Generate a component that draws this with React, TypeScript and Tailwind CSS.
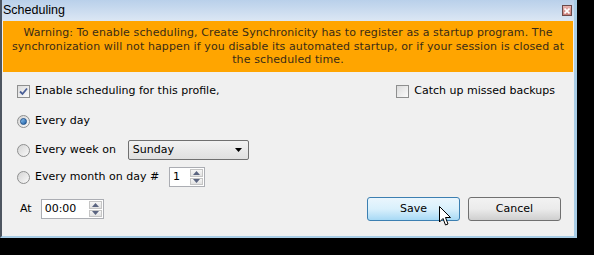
import React from 'react'

const ui = { fontFamily: '"DejaVu Sans", Verdana, sans-serif' }

function CheckBox({ checked }: { checked?: boolean }) {
    return (
        <span className="w-[13px] h-[13px] border border-[#8e8f8f] bg-gradient-to-br from-[#dcdcdc] to-[#fbfbfb] flex items-center justify-center shrink-0">
            {checked && (
                <svg width="9" height="9" viewBox="0 0 9 9">
                    <path d="M1 4.5 L3.5 7 L8 1.5" fill="none" stroke="#4a5f97" strokeWidth="1.8" />
                </svg>
            )}
        </span>
    )
}

function Radio({ checked }: { checked?: boolean }) {
    return (
        <span className="w-[13px] h-[13px] rounded-full border border-[#8e8f8f] bg-gradient-to-br from-[#d4d4d4] to-[#fafafa] flex items-center justify-center shrink-0">
            {checked && <span className="w-[7px] h-[7px] rounded-full bg-gradient-to-br from-[#8cc4f0] to-[#1b5fa6] border border-[#1e4f8a]" />}
        </span>
    )
}

function Spinner({ value, width }: { value: string; width: string }) {
    return (
        <div className={`${width} h-[20px] border border-[#abadb3] bg-white flex items-stretch`}>
            <span className="flex-1 pl-[3px] text-[11px] leading-[18px] text-black">{value}</span>
            <div className="w-[15px] flex flex-col gap-[1px] p-[1px]">
                <span className="flex-1 border border-[#c5c5c5] bg-gradient-to-b from-[#f6f6f6] to-[#e2e2e2] flex items-center justify-center">
                    <svg width="7" height="4" viewBox="0 0 7 4"><path d="M0 4 L3.5 0 L7 4 Z" fill="#5a6480" /></svg>
                </span>
                <span className="flex-1 border border-[#c5c5c5] bg-gradient-to-b from-[#f6f6f6] to-[#e2e2e2] flex items-center justify-center">
                    <svg width="7" height="4" viewBox="0 0 7 4"><path d="M0 0 L7 0 L3.5 4 Z" fill="#5a6480" /></svg>
                </span>
            </div>
        </div>
    )
}

export default function App() {
    return (
        <div className="w-[594px] h-[255px] bg-black overflow-hidden" style={ui}>
            <div className="w-[577px] h-[238px] flex flex-col border-l-2 border-l-[#4d5560] border-r-[3px] border-r-[#a9cde6] border-b-2 border-b-[#a9cde6] bg-[#f0f0f0]">
                {/* Title bar */}
                <div className="h-[21px] flex items-center justify-between bg-gradient-to-b from-[#b9d0ea] to-[#dce7f4] pl-[1px] pr-[2px]">
                    <span className="text-[12.5px] text-black font-['Liberation_Sans',Arial,sans-serif]">Scheduling</span>
                    <span className="w-[10px] h-[11px] border border-[#6b4a4a] bg-gradient-to-b from-[#e8b4b0] to-[#c77a76] flex items-center justify-center">
                        <svg width="6" height="6" viewBox="0 0 6 6">
                            <path d="M0.5 0.5 L5.5 5.5 M5.5 0.5 L0.5 5.5" stroke="#fff" strokeWidth="1.6" />
                        </svg>
                    </span>
                </div>

                {/* Warning */}
                <div className="mx-[1px] h-[51px] bg-[#ffa500] text-[#3a2c16] text-[11px] tracking-[0.1px] leading-[13.5px] text-center flex items-center justify-center whitespace-nowrap">
                    <p>
                        Warning: To enable scheduling, Create Synchronicity has to register as a startup program. The
                        <br />
                        synchronization will not happen if you disable its automated startup, or if your session is closed at
                        <br />
                        the scheduled time.
                    </p>
                </div>

                {/* Body */}
                <div className="flex-1 flex flex-col text-[11px] text-black pl-[15px] pr-[15px]">
                    <div className="mt-[13px] h-[13px] flex items-center justify-between">
                        <label className="flex items-center gap-[5px]">
                            <CheckBox checked />
                            <span>Enable scheduling for this profile,</span>
                        </label>
                        <label className="flex items-center gap-[5px] pr-[4px]">
                            <CheckBox />
                            <span>Catch up missed backups</span>
                        </label>
                    </div>

                    <label className="mt-[17px] h-[13px] flex items-center gap-[5px]">
                        <Radio checked />
                        <span>Every day</span>
                    </label>

                    <div className="mt-[12px] h-[20px] flex items-center">
                        <label className="flex items-center gap-[5px]">
                            <Radio />
                            <span>Every week on</span>
                        </label>
                        <div className="ml-[12px] w-[121px] h-[20px] border border-[#707070] rounded-[2px] bg-gradient-to-b from-[#f2f2f2] to-[#e0e0e0] flex items-center justify-between pl-[4px] pr-[6px]">
                            <span>Sunday</span>
                            <svg width="7" height="4" viewBox="0 0 7 4"><path d="M0 0 L7 0 L3.5 4 Z" fill="#000" /></svg>
                        </div>
                    </div>

                    <div className="mt-[7px] h-[20px] flex items-center">
                        <label className="flex items-center gap-[5px]">
                            <Radio />
                            <span>Every month on day #</span>
                        </label>
                        <div className="ml-[10px]">
                            <Spinner value="1" width="w-[36px]" />
                        </div>
                    </div>

                    <div className="mt-[10px] flex items-center justify-between -mr-[2px]">
                        <div className="flex items-center gap-[9px] pl-[3px]">
                            <span>At</span>
                            <Spinner value="00:00" width="w-[63px]" />
                        </div>
                        <div className="flex items-center gap-[8px] relative">
                            <button className="w-[93px] h-[24px] rounded-[3px] border border-[#3c7fb1] bg-gradient-to-b from-[#eaf6fd] via-[#d9f0fc] to-[#a7d9f5] text-[11px] text-black">
                                Save
                            </button>
                            <button className="w-[93px] h-[24px] rounded-[3px] border border-[#707070] bg-gradient-to-b from-[#f2f2f2] via-[#ebebeb] to-[#cfcfcf] text-[11px] text-black">
                                Cancel
                            </button>
                            {/* mouse pointer */}
                            <svg className="absolute left-[72px] top-[9px]" width="13" height="21" viewBox="0 0 13 21">
                                <path d="M0.5 0.5 L0.5 16 L4 12.5 L6.5 19 L9 18 L6.5 11.5 L11.5 11.5 Z" fill="#fff" stroke="#000" strokeWidth="1" strokeLinejoin="round" />
                            </svg>
                        </div>
                    </div>
                </div>
            </div>
        </div>
    )
}
